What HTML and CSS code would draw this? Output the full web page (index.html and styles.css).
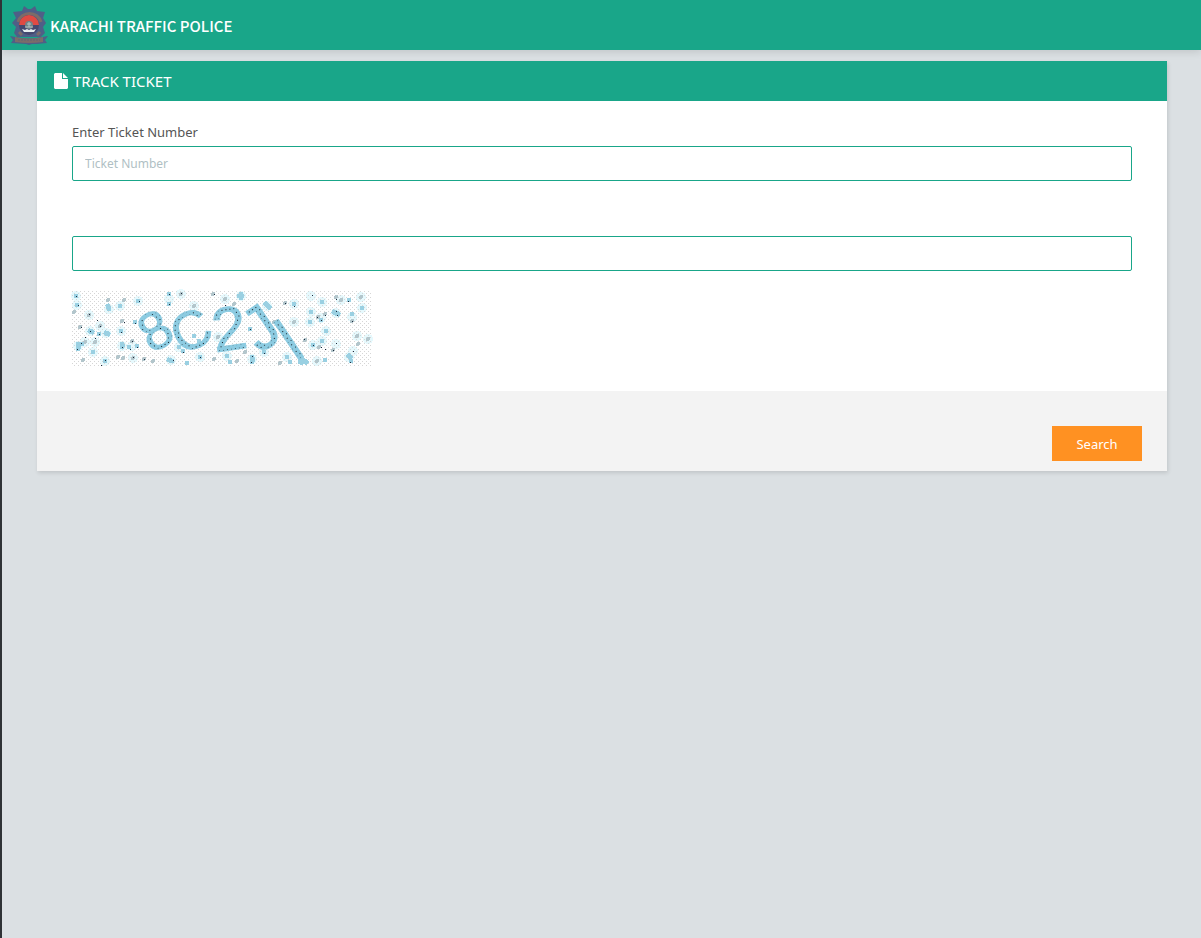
FILE: index.html
```html
<!DOCTYPE html>
<html lang="en">
  <head>
    <meta charset="UTF-8" />
    <meta name="viewport" content="width=device-width, initial-scale=1.0" />
    <title>Karachi Traffic Police</title>
    <link rel="stylesheet" href="styles.css">
  </head>
  <body>
    <header class="navbar">
      <a class="brand" href="#">
        <svg class="brand-logo" viewBox="0 0 38 40" aria-hidden="true">
          <path fill="#4f5f87" d="M14 1l4 3h3l4-3 2 5 8 1-2 6 3 5-3 4 2 6-4 4H7l-3-4 2-6-4-4 4-5-3-6 9-1z" />
          <path fill="none" stroke="#7c6c69" stroke-width="3" d="M8 17a12 12 0 0 1 23 0M9 27l3 3M30 27l-3 3" />
          <circle cx="19" cy="20" r="10" fill="#44486f" />
          <path fill="#df4a43" d="M9 20a10 10 0 0 1 20 0z" />
          <circle cx="19" cy="20" r="4" fill="#6f8388" />
          <path fill="none" stroke="#b5c4c4" d="M17 19h4M19 17v5M15 22h8" />
          <path fill="#e8eef0" d="M12 24l3 1 2-1 2 1 2-1 2 1 3-1-2 3H14z" />
          <path fill="#4f5f87" d="M0 31l6 1q13 3 26 0l6-1-3 4 2 3-10 1-5 0-3 1-3-1-15-1 2-3z" />
          <path fill="#7c6c69" d="M5 32q14 3 28 0v5q-14 2-28 0z" />
          <path fill="none" stroke="#5f6479" stroke-dasharray="2 1" d="M8 35h22" />
        </svg>
        <span>KARACHI TRAFFIC POLICE</span>
      </a>
    </header>
    <main class="content">
      <form class="portlet" id="form">
        <h1 class="portlet-title">
          <svg class="icon-file" viewBox="0 0 14 16" aria-hidden="true">
            <path fill="#fff" d="M1 0h7v6h6v9l-1 1H1l-1-1V1zM9 0l5 5H9z" />
          </svg>
          TRACK TICKET
        </h1>
        <div class="portlet-body">
          <div class="form-group">
            <label for="ticket">Enter Ticket Number</label>
            <input class="form-control" type="text" id="ticket" name="ticket" placeholder="Ticket Number" />
          </div>
          <div class="form-group">
            <input class="form-control" type="text" id="captcha" name="captcha" aria-label="Captcha" />
            <svg class="captcha" viewBox="0 0 300 75">
              <defs>
                <pattern id="grain" width="4" height="4" patternUnits="userSpaceOnUse">
                  <path fill="#d6d6d6" d="M0 0h1v1h-1zM2 2h1v1h-1z" />
                </pattern>
                <pattern id="ink" width="4" height="8" patternUnits="userSpaceOnUse">
                  <path fill="#8ccbe1" d="M0 0h4v8H0z" />
                  <path fill="#10161c" d="M1 1h1v1h-1zM3 5h1v1h-1z" />
                </pattern>
              </defs>
              <rect width="300" height="75" fill="#fff" />
              <!-- noise -->
              <path class="halo" d="M4 5h0M5 14h0M17 24h0M37 18h0M48 15h0M66 10h0M28 35h0M18 40h0M34 42h0M49 40h0M6 55h0M13 51h0M23 51h0M50 55h0M60 55h0M21 61h0M33 70h0M61 67h0M97 8h0M109 3h0M122 15h0M107 56h0M99 69h0M128 66h0M146 46h0M169 5h0M153 8h0M195 15h0M222 13h0M180 68h0M155 65h0M192 61h0M215 66h0M222 31h0M239 5h0M250 11h0M269 9h0M289 6h0M290 17h0M264 22h0M239 21h0M249 27h0M238 31h0M280 26h0M254 40h0M241 54h0M250 50h0M264 53h0M285 45h0M281 60h0M277 66h0M245 70h0M296 48h0" />
              <rect width="300" height="75" fill="url(#grain)" />
              <path class="speck" d="M2 21h0M17 24h0M36 9h0M52 9h0M50 30h0M28 35h0M8 36h0M23 51h0M13 51h0M60 50h0M11 69h0M46 66h0M51 67h0M61 67h0M72 68h0M109 3h0M122 15h0M141 3h0M81 70h0M146 46h0M142 68h0M162 13h0M153 8h0M213 12h0M173 61h0M165 70h0M202 31h0M222 31h0M208 72h0M264 6h0M269 9h0M289 6h0M253 23h0M246 26h0M280 30h0M233 49h0M247 56h0M261 59h0M285 45h0M286 53h0M296 48h0M245 70h0" />
              <path class="blob" d="M4 5h0M5 14h0M36 15l1 3M48 15h0M66 10h0M18 40l2 1M27 43h0M34 42l2 1M49 40h0M63 31h0M6 53v5M10 53h0M50 53v3M57 56h0M65 55h0M21 61h0M33 70h0M97 3h0M97 13h0M122 45h0M127 50h0M107 56h0M111 60h0M97 69l3 1M115 72h0M128 66h0M169 3v4M167 5h3M194 13l3 3M222 13h0M180 66v5M155 65h0M158 71h0M192 61h0M178 38h0M215 66h0M218 71h0M250 11h0M277 9h0M290 17h0M262 21l4 2M239 21h0M249 29h0M238 31h0M280 23h0M254 40h0M250 50h0M241 54h0M277 65l1 1M279 70h0M253 69h0M230 68l4 3M228 71h3" />
              <path class="dot" d="M4 5h1M6 14h1M17 23h1M25 29h1M52 31h1M67 10h1M28 35h1M9 36h1M18 40h1M13 46h1M23 47h1M27 43h1M49 41h1M63 32h1M5 58h1M9 52h1M50 56h1M58 58h1M65 56h1M60 50h1M33 69h1M61 66h1M72 68h1M29 74h1M97 3h1M97 13h1M142 3h1M109 2h1M111 61h1M128 66h1M101 69h1M153 14h1M180 65h1M179 71h1M178 38h1M192 62h1M213 12h1M222 15h1M240 4h1M264 8h1M276 10h1M264 20h1M265 24h1M245 26h1M249 29h1M253 24h1M280 30h1M232 48h1M241 54h1M249 56h1M253 58h1M261 59h1M264 52h1M281 60h1M278 71h1" />
              <g class="captcha-text" text-anchor="middle">
                <text transform="translate(83 39) rotate(-30)" y="19">8</text>
                <text transform="translate(119 39) rotate(-25)" y="19">C</text>
                <text class="large" transform="translate(157 37) rotate(-8)" y="22">2</text>
                <text class="large" transform="translate(188 36) rotate(-34)" y="22">J</text>
                <text class="large" transform="translate(217 49) rotate(-34)" y="22">l</text>
              </g>
            </svg>
          </div>
        </div>
        <div class="portlet-footer">
          <button class="btn" type="submit">Search</button>
        </div>
      </form>
    </main>
  </body>
</html>
```

FILE: styles.css
```css
* {
  box-sizing: border-box;
}

body {
  margin: 0;
  min-height: 100vh;
  border-left: 2px solid #2f3236;
  background-color: #dbe0e3;
  font-family: "Noto Sans", sans-serif;
  font-size: 13px;
  color: #555;
}

.navbar {
  height: 50px;
  padding: 5px 8px;
  background-color: #19a689;
  box-shadow: 0 2px 8px rgba(0, 0, 0, 0.12);
}

.brand {
  display: inline-flex;
  align-items: center;
  gap: 2px;
  font-family: "Noto Sans CJK SC", sans-serif;
  font-size: 15px;
  font-weight: 500;
  color: #fff;
  text-decoration: none;
}

.brand-logo {
  width: 38px;
  height: 40px;
}

.content {
  padding: 11px 34px 24px 35px;
}

.portlet {
  background-color: #fff;
  box-shadow: 1px 2px 4px rgba(0, 0, 0, 0.12);
}

.portlet-title {
  display: flex;
  align-items: center;
  gap: 5px;
  height: 40px;
  margin: 0;
  padding: 0 17px;
  background-color: #19a689;
  color: #fff;
  font-size: 15px;
  font-weight: 400;
}

.icon-file {
  width: 14px;
  height: 16px;
}

.portlet-body {
  display: flex;
  flex-direction: column;
  gap: 55px;
  padding: 20px 35px 25px;
}

.form-group {
  display: flex;
  flex-direction: column;
}

label {
  height: 25px;
  line-height: 22px;
}

.form-control {
  width: 100%;
  height: 35px;
  padding: 0 12px;
  border: 1px solid #19a689;
  border-radius: 2px;
  outline: none;
  background-color: #fff;
  font-family: inherit;
  font-size: 12px;
  color: #555;
}

.form-control::placeholder {
  color: #b0bfc4;
}

.captcha {
  width: 300px;
  height: 75px;
  margin-top: 20px;
  overflow: visible;
}

.captcha path,
.captcha rect {
  shape-rendering: crispEdges;
}

.halo {
  stroke: #e6f9fd;
  stroke-width: 10;
  stroke-linecap: round;
}

.speck {
  stroke: #b3c6cc;
  stroke-width: 4;
  stroke-linecap: round;
}

.blob {
  fill: none;
  stroke: #9ad0e2;
  stroke-width: 5;
  stroke-linecap: round;
}

.dot {
  stroke: #1b2a3c;
  stroke-width: 1;
}

.captcha-text {
  fill: url(#ink);
  stroke: #8ccbe1;
  stroke-width: 1;
  font-family: "Liberation Sans", sans-serif;
  font-size: 54px;
}

.captcha-text .large {
  font-size: 62px;
}

.portlet-footer {
  display: flex;
  justify-content: flex-end;
  padding: 35px 25px 10px;
  background-color: #f3f3f3;
}

.btn {
  width: 90px;
  height: 35px;
  border: none;
  background-color: #ff9122;
  color: #fff;
  font-family: inherit;
  font-size: 13px;
  cursor: pointer;
}
```
